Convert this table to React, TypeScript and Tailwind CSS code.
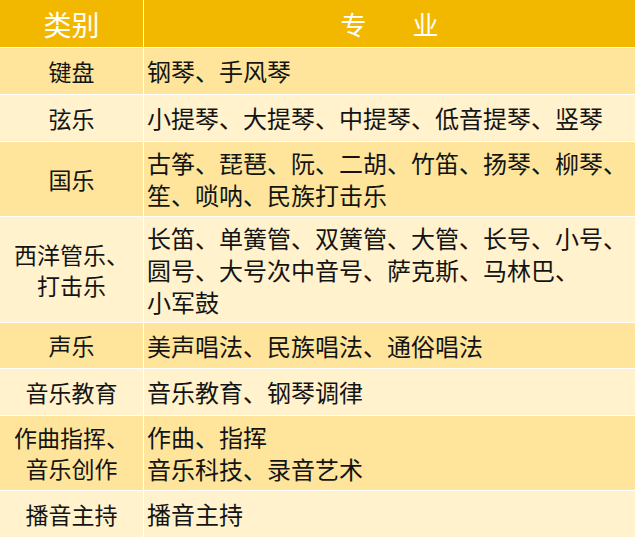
const rows: { cat: string[]; items: string[]; h: string; lh: string; tone: "a" | "b" }[] = [
  { cat: ["键盘"], items: ["钢琴、手风琴"], h: "h-[46px]", lh: "leading-[32px]", tone: "a" },
  { cat: ["弦乐"], items: ["小提琴、大提琴、中提琴、低音提琴、竖琴"], h: "h-[46px]", lh: "leading-[32px]", tone: "b" },
  {
    cat: ["国乐"],
    items: ["古筝、琵琶、阮、二胡、竹笛、扬琴、柳琴、", "笙、唢呐、民族打击乐"],
    h: "h-[74px]",
    lh: "leading-[32px]",
    tone: "a",
  },
  {
    cat: ["西洋管乐、", "打击乐"],
    items: ["长笛、单簧管、双簧管、大管、长号、小号、", "圆号、大号次中音号、萨克斯、马林巴、", "小军鼓"],
    h: "h-[105px]",
    lh: "leading-[32px]",
    tone: "b",
  },
  { cat: ["声乐"], items: ["美声唱法、民族唱法、通俗唱法"], h: "h-[45px]", lh: "leading-[32px]", tone: "a" },
  { cat: ["音乐教育"], items: ["音乐教育、钢琴调律"], h: "h-[46px]", lh: "leading-[32px]", tone: "b" },
  {
    cat: ["作曲指挥、", "音乐创作"],
    items: ["作曲、指挥", "音乐科技、录音艺术"],
    h: "h-[74px]",
    lh: "leading-[32px]",
    tone: "a",
  },
  { cat: ["播音主持"], items: ["播音主持"], h: "h-[46px]", lh: "leading-[32px]", tone: "b" },
];

export default function App() {
  return (
    <div
      className="w-[636px] h-[537px] bg-white overflow-hidden"
      style={{ fontFamily: '"Noto Sans CJK SC", "Noto Sans", sans-serif' }}
    >
      <div className="grid grid-cols-[143px_491px] gap-x-px gap-y-px">
        <div className="h-[47px] bg-[#f2b800] flex items-center justify-center text-[28px] text-white">
          类别
        </div>
        <div className="h-[47px] bg-[#f2b800] flex items-center justify-center gap-[46px] text-[26px] text-white">
          <span>专</span>
          <span>业</span>
        </div>
        {rows.map((r) => {
          const bg = r.tone === "a" ? "bg-[#fee59b]" : "bg-[#fff2cc]";
          return [
            <div
              key={r.cat.join() + "c"}
              className={`${r.h} ${bg} flex flex-col items-center justify-center text-[23px] leading-[31px] text-[#141414] text-center whitespace-nowrap`}
            >
              {r.cat.map((c) => (
                <span key={c} className="block">
                  {c}
                </span>
              ))}
            </div>,
            <div
              key={r.cat.join() + "i"}
              className={`${r.h} ${bg} ${r.lh} flex flex-col justify-center pl-[3px] text-[24px] text-[#141414] whitespace-nowrap`}
            >
              {r.items.map((t) => (
                <span key={t} className="block">
                  {t}
                </span>
              ))}
            </div>,
          ];
        })}
      </div>
    </div>
  );
}
